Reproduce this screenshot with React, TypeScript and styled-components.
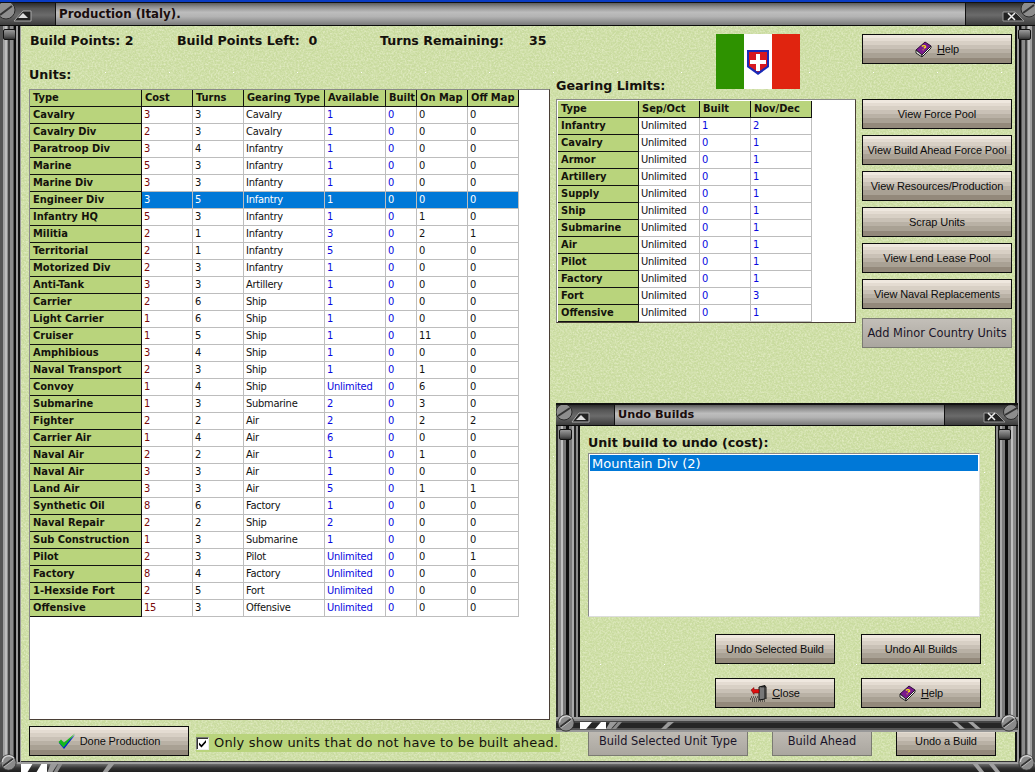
import React from "react";
import styled, { createGlobalStyle } from "styled-components";

const noise = `data:image/svg+xml,${encodeURIComponent(
  `<svg xmlns="http://www.w3.org/2000/svg" width="192" height="192"><filter id="n" x="0" y="0" width="100%" height="100%"><feTurbulence type="fractalNoise" baseFrequency="0.55" numOctaves="3" seed="7" stitchTiles="stitch"/><feColorMatrix values="0 0 0 0 1  0 0 0 0 1  0 0 0 0 0.86  1.7 0 0 0 -0.62"/></filter><rect width="192" height="192" fill="#c9db9f"/><rect width="192" height="192" filter="url(#n)" opacity="0.55"/><rect x="20" y="46" width="1" height="1" fill="#fff"/><rect x="84" y="46" width="1" height="1" fill="#fff"/><rect x="148" y="46" width="1" height="1" fill="#fff"/></svg>`
)}`;

const Global = createGlobalStyle`
  html, body { margin: 0; padding: 0; width: 1035px; height: 772px; overflow: hidden; background: #000; }
  * { box-sizing: border-box; }
  table { border-collapse: separate; border-spacing: 0; table-layout: fixed; }
`;

const Frame = styled.div`
  position: relative;
  width: 1035px;
  height: 772px;
  display: grid;
  grid-template-columns: 21px 994px 20px;
  grid-template-rows: 2px 24px 1fr 10px;
  overflow: hidden;
  background: #3a3a3a;
`;

const BlueStrip = styled.div`
  grid-column: 1 / -1;
  background: #0a3cc4;
`;

const TitleBar = styled.div`
  grid-column: 1 / -1;
  display: flex;
  align-items: stretch;
  height: 100%;
  border-top: 1px solid #111;
  border-bottom: 1px solid #0b0b0b;
  background: linear-gradient(#5c5c5c 0%, #8e8e8e 18%, #bdbdbd 42%, #b3b3b3 62%, #7a7a7a 100%);
`;

const TitleCap = styled.div<{ $w: number; $right?: boolean }>`
  position: relative;
  flex: 0 0 ${(p) => p.$w}px;
  border-right: ${(p) => (p.$right ? "none" : "1px solid #111")};
  border-left: ${(p) => (p.$right ? "1px solid #111" : "none")};
  background: linear-gradient(#2b2b2b 0%, #555 25%, #6b6b6b 55%, #3c3c3c 100%);
`;

const TitleText = styled.div<{ $small?: boolean }>`
  flex: 1;
  padding-left: 3px;
  font: bold ${(p) => (p.$small ? "11.3px/19px" : "11.8px/23px")} "DejaVu Sans", sans-serif;
  color: #1a0d0d;
`;

const CapIcon = styled.svg<{ $l?: number; $r?: number }>`
  position: absolute;
  top: 0;
  ${(p) => (p.$l !== undefined ? `left: ${p.$l}px;` : "")}
  ${(p) => (p.$r !== undefined ? `right: ${p.$r}px;` : "")}
`;

const VRail = styled.div<{ $flip?: boolean }>`
  position: relative;
  background: linear-gradient(
    ${(p) => (p.$flip ? "270deg" : "90deg")},
    #555 0 3px,
    #a0a0a0 3px 5px,
    #bdbdbd 5px 7px,
    #8e8e8e 7px 8px,
    #444 8px 10px,
    #8c8c8c 10px 13px,
    #555 13px 14px,
    #0c0c0c 14px 16px,
    #9a9a9a 16px 18px,
    #121212 18px 20px,
    #9a9a9a 20px 21px
  );
`;

const InnerRail = styled.div<{ $flip?: boolean }>`
  position: relative;
  background: linear-gradient(
    ${(p) => (p.$flip ? "270deg" : "90deg")},
    #2c2c2c 0 2px,
    #8a8a8a 2px 5px,
    #c0c0c0 5px 7px,
    #777 7px 10px,
    #0d0d0d 10px 13px,
    #7c7c7c 13px 16px,
    #aaa 16px 18px,
    #222 18px 20px,
    #8a8a8a 20px 22px,
    #111 22px 24px
  );
`;

const Knob = styled.div`
  position: absolute;
  top: 3px;
  left: 3px;
  width: 13px;
  height: 11px;
  border: 1px solid #111;
  border-radius: 2px;
  background: linear-gradient(#9a9a9a, #5a5a5a 70%, #333);
`;

const HRail = styled.div<{ $inset: number }>`
  grid-column: 1 / -1;
  display: flex;
  align-items: center;
  justify-content: space-between;
  padding: 0 ${(p) => p.$inset}px;
  border-top: 2px solid #a0a0a0;
  background: linear-gradient(#6e6e6e, #333 50%, #1e1e1e);
  overflow: hidden;
`;

const Content = styled.main`
  grid-column: 2;
  display: flex;
  flex-direction: column;
  justify-content: space-between;
  padding: 8px 0 5px 8px;
  background: url("${noise}");
  border-bottom: 1px solid #333;
`;

const Columns = styled.div`
  display: flex;
  align-items: flex-start;
  gap: 6px;
`;

const LeftCol = styled.section`
  flex: 0 0 521px;
  display: flex;
  flex-direction: column;
`;

const Stats = styled.div`
  display: flex;
  height: 33px;
  padding-left: 1px;
  font: bold 12.6px/13px "DejaVu Sans", sans-serif;
  color: #14100c;
`;

const Stat = styled.span<{ $w: number }>`
  flex: 0 0 ${(p) => p.$w}px;
  white-space: pre;
`;

const Heading = styled.h2`
  margin: 0;
  font: bold 12.7px/16px "DejaVu Sans", sans-serif;
  color: #14100c;
`;

const UnitsHeading = styled(Heading)`
  height: 22px;
`;

const Sunken = styled.div<{ $h: number; $w: number }>`
  width: ${(p) => p.$w}px;
  height: ${(p) => p.$h}px;
  background: #fff;
  border-top: 1px solid #8a8a8a;
  border-left: 1px solid #8a8a8a;
  border-right: 1px solid #4a3f36;
  border-bottom: 1px solid #4a3f36;
`;

const Grid = styled.table<{ $w: number }>`
  width: ${(p) => p.$w}px;
  font: 11px/16px "DejaVu Sans Condensed", "DejaVu Sans", sans-serif;
`;

const Head = styled.th`
  height: 17px;
  padding: 0 0 0 3px;
  background: #b9d47c;
  border-right: 1px solid #111;
  border-bottom: 1px solid #111;
  font: bold 11px/16px "DejaVu Sans Condensed", "DejaVu Sans", sans-serif;
  color: #14120c;
  text-align: left;
  white-space: nowrap;
  overflow: hidden;
`;

const RowHead = styled(Head).attrs({ scope: "row" })`
  font-size: 11px;
`;

const tones: Record<string, string> = {
  ink: "#111",
  cost: "#7a0a0a",
  blue: "#0808e0",
};

const Cell = styled.td<{ $tone?: string; $sel?: boolean }>`
  height: 17px;
  padding: 0 0 0 2px;
  border-right: 1px solid #bdbdbd;
  border-bottom: 1px solid #bdbdbd;
  background: ${(p) => (p.$sel ? "#0078d7" : "#fff")};
  color: ${(p) => (p.$sel ? "#fff" : tones[p.$tone || "ink"])};
  letter-spacing: -0.25px;
  white-space: nowrap;
  overflow: hidden;
`;

const MidCol = styled.section`
  flex: 0 0 300px;
  display: flex;
  flex-direction: column;
`;

const MidTop = styled.div`
  height: 65px;
  padding-right: 56px;
  display: flex;
  justify-content: space-between;
  align-items: flex-start;
`;

const GearingHeading = styled(Heading)`
  margin-top: 44px;
`;

const GearingBox = styled(Sunken)`
  padding: 1px 0 0 1px;
`;

const Flag = styled.svg`
  display: block;
`;

const RightCol = styled.section`
  flex: 0 0 150px;
  display: flex;
  flex-direction: column;
`;

const Btn = styled.button<{ $w?: number; $mt?: number }>`
  display: flex;
  align-items: center;
  justify-content: center;
  gap: 5px;
  width: ${(p) => p.$w ?? 150}px;
  height: 30px;
  margin: ${(p) => p.$mt ?? 0}px 0 0;
  padding: 0;
  border: 1px solid #0c0c0c;
  background: linear-gradient(
    #efe8df 0 3px,
    #e4dcd2 3px 6px,
    #d8d0c5 6px 10px,
    #c9c1b6 10px 14px,
    #b9b1a5 14px 18px,
    #a9a194 18px 23px,
    #93897b 23px 100%
  );
  font: 11px/14px "Liberation Sans", sans-serif;
  letter-spacing: -0.1px;
  color: #0c0c0c;
  white-space: nowrap;
  u { text-decoration: underline; }
`;

const DisabledBtn = styled.button<{ $w?: number; $mt?: number }>`
  width: ${(p) => p.$w ?? 150}px;
  height: 30px;
  margin: ${(p) => p.$mt ?? 0}px 0 0;
  padding: 0;
  border: 1px solid #7a7a72;
  background: linear-gradient(#c3bfb8, #aaa69f);
  font: 11.4px/14px "DejaVu Sans", sans-serif;
  color: #1a1428;
  white-space: nowrap;
`;

const BottomBar = styled.div`
  display: flex;
  align-items: center;
  height: 30px;
`;

const CheckStrip = styled.label`
  flex: 0 0 364px;
  height: 18px;
  margin: 4px 28px 0 7px;
  display: flex;
  align-items: center;
  gap: 5px;
  background: #b9d47c;
  font: 13px/16px "DejaVu Sans", sans-serif;
  letter-spacing: 0.18px;
  color: #14120c;
  white-space: nowrap;
`;

const CheckBox = styled.span`
  flex: 0 0 13px;
  height: 13px;
  display: block;
  background: #fff;
  border: 1px solid;
  border-color: #777 #eee #eee #777;
  box-shadow: inset 1px 1px 0 #333;
`;

const BottomGroup = styled.div`
  display: flex;
  gap: 24px;
`;

const Win = styled.aside`
  position: absolute;
  left: 556px;
  top: 403px;
  width: 462px;
  height: 329px;
  display: grid;
  grid-template-columns: 24px 415px 23px;
  grid-template-rows: 22px 1fr 15px;
  background: #333;
  border-top: 1px solid #111;
`;

const WinBody = styled.div`
  grid-column: 2;
  padding: 9px 14px 8px 8px;
  display: flex;
  flex-direction: column;
  background: url("${noise}");
  border-bottom: 1px solid #111;
`;

const WinLabel = styled.div`
  height: 18px;
  font: bold 12.7px/16px "DejaVu Sans", sans-serif;
  color: #14100c;
`;

const ListBox = styled.div`
  width: 392px;
  height: 164px;
  background: #fff;
  border-top: 1px solid #8a8a8a;
  border-left: 1px solid #8a8a8a;
  border-right: 1px solid #ddd;
  border-bottom: 1px solid #ddd;
  padding: 1px;
  margin-bottom: 17px;
`;

const ListItem = styled.div`
  height: 16px;
  padding-left: 2px;
  background: #0078d7;
  color: #fff;
  font: 13px/18px "DejaVu Sans", sans-serif;
`;

const WinRows = styled.div`
  display: flex;
  flex-direction: column;
  gap: 14px;
`;

const WinRow = styled.div`
  display: flex;
  justify-content: flex-end;
  gap: 26px;
`;

const WinHRail = styled(HRail)`
  background: linear-gradient(#8a8a8a 0 2px, #444 2px 4px, #262626 4px 9px, #555 9px 11px, #999 11px 13px);
`;

const Bolt = ({ size = 21, style }: { size?: number; style?: React.CSSProperties }) => (
  <svg width={size} height={size} viewBox="0 0 21 21" style={{ position: "absolute", zIndex: 2, ...style }} aria-hidden="true">
    <circle cx="10.5" cy="10.5" r="9.5" fill="#8b8b8b" stroke="#2a2a2a" />
    <path d="M3 10a8 8 0 0 1 14-5" stroke="#d5d5d5" strokeWidth="1.6" fill="none" />
    <path d="M4 15 L16 6" stroke="#333" strokeWidth="2.4" />
    <path d="M5 16 L17 7" stroke="#cfcfcf" strokeWidth="1" />
  </svg>
);

const Ornament = ({ left, h = 10 }: { left?: boolean; h?: number }) =>
  left ? (
    <svg width="132" height={h} viewBox="0 0 132 10" preserveAspectRatio="none" aria-hidden="true">
      <path d="M0 0H12L6 10H0Z" fill="#fff" />
      <path d="M21 0H26V10H15Z" fill="#fff" />
      <path d="M30 0H37L31 10H26Z" fill="#9a9a9a" />
      <path d="M38 0H42L36 10H32Z" fill="#8a8a8a" />
      <path d="M88 0H94L86 10H81Z" fill="#9a9a9a" />
    </svg>
  ) : (
    <svg width="132" height={h} viewBox="0 0 132 10" preserveAspectRatio="none" aria-hidden="true">
      <path d="M90 0H95L103 10H98Z" fill="#a0a0a0" />
      <path d="M106 0H111L119 10H114Z" fill="#a0a0a0" />
    </svg>
  );

const BookIcon = () => (
  <svg width="17" height="17" viewBox="0 0 17 17" aria-hidden="true">
    <path d="M1 9 L10 1 L16 5 L7 14Z" fill="#7a1a8e" stroke="#2a0a38" />
    <path d="M1 9 L7 14 L7 16 L1 12Z" fill="#e8e8e8" stroke="#222" />
    <path d="M7 14 L16 5 L16 7 L7 16Z" fill="#fff" stroke="#222" />
    <path d="M7 5.5 C8 4 11 4.5 10.5 6.2 L8.8 7.2 M8.2 8.6v.6" stroke="#f4d820" strokeWidth="1.4" fill="none" />
  </svg>
);

const CheckIcon = () => (
  <svg width="17" height="17" viewBox="0 0 17 17" aria-hidden="true">
    <path d="M1 10 L6 16 L17 2 L6.2 11.5 L3 8Z" fill="#0020d0" />
    <path d="M0.5 9 L5.5 14.5 L17 0.5 L6 9.5 L3 6.5Z" fill="#14b81c" />
  </svg>
);

const DoorIcon = () => (
  <svg width="17" height="17" viewBox="0 0 17 17" aria-hidden="true">
    <path d="M9 2 L15 0.5 V14 L9 15Z" fill="#777" stroke="#111" />
    <path d="M11 1.8 H16 V14" fill="none" stroke="#111" />
    <path d="M1 5 L4 2.5 V4.5 H9 V8 H4 V9.5Z" fill="#e01010" stroke="#600" strokeWidth=".5" />
    <path d="M1 12h7M0 14h8M2 16h13" stroke="#111" strokeDasharray="1 1" />
  </svg>
);

const TickMark = () => (
  <svg width="11" height="11" viewBox="0 0 11 11" style={{ display: "block" }} aria-hidden="true">
    <path d="M2 4.5 L4.5 7 L9 2 V4.5 L4.5 9.5 L2 7Z" fill="#000" />
  </svg>
);

const units: [string, string, string, string, string, string, string, string][] = [
  ["Cavalry", "3", "3", "Cavalry", "1", "0", "0", "0"],
  ["Cavalry Div", "2", "3", "Cavalry", "1", "0", "0", "0"],
  ["Paratroop Div", "3", "4", "Infantry", "1", "0", "0", "0"],
  ["Marine", "5", "3", "Infantry", "1", "0", "0", "0"],
  ["Marine Div", "3", "3", "Infantry", "1", "0", "0", "0"],
  ["Engineer Div", "3", "5", "Infantry", "1", "0", "0", "0"],
  ["Infantry HQ", "5", "3", "Infantry", "1", "0", "1", "0"],
  ["Militia", "2", "1", "Infantry", "3", "0", "2", "1"],
  ["Territorial", "2", "1", "Infantry", "5", "0", "0", "0"],
  ["Motorized Div", "2", "3", "Infantry", "1", "0", "0", "0"],
  ["Anti-Tank", "3", "3", "Artillery", "1", "0", "0", "0"],
  ["Carrier", "2", "6", "Ship", "1", "0", "0", "0"],
  ["Light Carrier", "1", "6", "Ship", "1", "0", "0", "0"],
  ["Cruiser", "1", "5", "Ship", "1", "0", "11", "0"],
  ["Amphibious", "3", "4", "Ship", "1", "0", "0", "0"],
  ["Naval Transport", "2", "3", "Ship", "1", "0", "1", "0"],
  ["Convoy", "1", "4", "Ship", "Unlimited", "0", "6", "0"],
  ["Submarine", "1", "3", "Submarine", "2", "0", "3", "0"],
  ["Fighter", "2", "2", "Air", "2", "0", "2", "2"],
  ["Carrier Air", "1", "4", "Air", "6", "0", "0", "0"],
  ["Naval Air", "2", "2", "Air", "1", "0", "1", "0"],
  ["Naval Air", "3", "3", "Air", "1", "0", "0", "0"],
  ["Land Air", "3", "3", "Air", "5", "0", "1", "1"],
  ["Synthetic Oil", "8", "6", "Factory", "1", "0", "0", "0"],
  ["Naval Repair", "2", "2", "Ship", "2", "0", "0", "0"],
  ["Sub Construction", "1", "3", "Submarine", "1", "0", "0", "0"],
  ["Pilot", "2", "3", "Pilot", "Unlimited", "0", "0", "1"],
  ["Factory", "8", "4", "Factory", "Unlimited", "0", "0", "0"],
  ["1-Hexside Fort", "2", "5", "Fort", "Unlimited", "0", "0", "0"],
  ["Offensive", "15", "3", "Offensive", "Unlimited", "0", "0", "0"],
];

const unitCols = [112, 51, 51, 81, 61, 31, 51, 51];
const unitHeads = ["Type", "Cost", "Turns", "Gearing Type", "Available", "Built", "On Map", "Off Map"];
const unitTones = ["", "cost", "ink", "ink", "blue", "blue", "ink", "ink"];

const gearing: [string, string, string][] = [
  ["Infantry", "1", "2"],
  ["Cavalry", "0", "1"],
  ["Armor", "0", "1"],
  ["Artillery", "0", "1"],
  ["Supply", "0", "1"],
  ["Ship", "0", "1"],
  ["Submarine", "0", "1"],
  ["Air", "0", "1"],
  ["Pilot", "0", "1"],
  ["Factory", "0", "1"],
  ["Fort", "0", "3"],
  ["Offensive", "0", "1"],
];
const gearCols = [81, 61, 51, 61];

export default function App() {
  return (
    <>
      <Global />
      <Frame>
        <BlueStrip />
        <TitleBar>
          <TitleCap $w={56}>
            <CapIcon $l={0} width="34" height="22" viewBox="0 0 34 22" aria-hidden="true">
              <circle cx="6" cy="7" r="9" fill="#8d8d8d" stroke="#2a2a2a" />
              <path d="M0 12 L12 3" stroke="#333" strokeWidth="2" />
              <path d="M14 18 L23 8 H31 V18Z" fill="#222" stroke="#aaa" />
              <path d="M18 15 L23 10 L28 15Z" fill="#ddd" />
            </CapIcon>
          </TitleCap>
          <TitleText>Production (Italy).</TitleText>
          <TitleCap $w={70} $right>
            <CapIcon $r={0} width="36" height="22" viewBox="0 0 36 22" aria-hidden="true">
              <path d="M4 18 V9 H16 L25 18Z" fill="#222" stroke="#999" />
              <path d="M9 10 L16 17 M16 10 L9 17" stroke="#eee" strokeWidth="1.5" />
              <circle cx="30" cy="6" r="8" fill="#8d8d8d" stroke="#2a2a2a" />
              <path d="M24 10 L35 2" stroke="#333" strokeWidth="2" />
            </CapIcon>
          </TitleCap>
        </TitleBar>

        <VRail>
          <Knob />
          <Bolt size={17} style={{ left: 0, bottom: -9 }} />
        </VRail>
        <Content>
          <Columns>
            <LeftCol>
              <Stats>
                <Stat $w={147}>Build Points: 2</Stat>
                <Stat $w={203}>Build Points Left:  0</Stat>
                <Stat $w={149}>Turns Remaining:</Stat>
                <Stat $w={20}>35</Stat>
              </Stats>
              <UnitsHeading>Units:</UnitsHeading>
              <Sunken $w={521} $h={631}>
                <Grid $w={489}>
                  <colgroup>
                    {unitCols.map((w, i) => (
                      <col key={i} width={w} />
                    ))}
                  </colgroup>
                  <thead>
                    <tr>
                      {unitHeads.map((h) => (
                        <Head key={h}>{h}</Head>
                      ))}
                    </tr>
                  </thead>
                  <tbody>
                    {units.map((row, i) => (
                      <tr key={i}>
                        <RowHead>{row[0]}</RowHead>
                        {row.slice(1).map((v, j) => (
                          <Cell key={j} $tone={unitTones[j + 1]} $sel={i === 5}>
                            {v}
                          </Cell>
                        ))}
                      </tr>
                    ))}
                  </tbody>
                </Grid>
              </Sunken>
            </LeftCol>

            <MidCol>
              <MidTop>
                <GearingHeading>Gearing Limits:</GearingHeading>
                <Flag width="84" height="55" viewBox="0 0 84 55" role="img" aria-label="Italy">
                  <rect width="28" height="55" fill="#2e9200" />
                  <rect x="28" width="28" height="55" fill="#fff" />
                  <rect x="56" width="28" height="55" fill="#e0240f" />
                  <path d="M31 16 H53 V33 L42 41 L31 33Z" fill="#1a2ab8" />
                  <path d="M33 18 H51 V32 L42 38 L33 32Z" fill="#d81820" />
                  <path d="M40 20 H44 V26 H50 V30 H44 V37 H40 V30 H34 V26 H40Z" fill="#fff" />
                </Flag>
              </MidTop>
              <GearingBox $w={300} $h={224}>
                <Grid $w={254}>
                  <colgroup>
                    {gearCols.map((w, i) => (
                      <col key={i} width={w} />
                    ))}
                  </colgroup>
                  <thead>
                    <tr>
                      <Head>Type</Head>
                      <Head>Sep/Oct</Head>
                      <Head>Built</Head>
                      <Head>Nov/Dec</Head>
                    </tr>
                  </thead>
                  <tbody>
                    {gearing.map((g) => (
                      <tr key={g[0]}>
                        <RowHead>{g[0]}</RowHead>
                        <Cell>Unlimited</Cell>
                        <Cell $tone="blue">{g[1]}</Cell>
                        <Cell $tone="blue">{g[2]}</Cell>
                      </tr>
                    ))}
                  </tbody>
                </Grid>
              </GearingBox>
            </MidCol>

            <RightCol>
              <Btn>
                <BookIcon />
                <span>
                  <u>H</u>elp
                </span>
              </Btn>
              <Btn $mt={35}>View Force Pool</Btn>
              <Btn $mt={6}>View Build Ahead Force Pool</Btn>
              <Btn $mt={6}>View Resources/Production</Btn>
              <Btn $mt={6}>Scrap Units</Btn>
              <Btn $mt={6}>View Lend Lease Pool</Btn>
              <Btn $mt={6}>View Naval Replacements</Btn>
              <DisabledBtn $mt={9}>Add Minor Country Units</DisabledBtn>
            </RightCol>
          </Columns>

          <BottomBar>
            <Btn $w={160}>
              <CheckIcon />
              <span>Done Production</span>
            </Btn>
            <CheckStrip>
              <CheckBox>
                <TickMark />
              </CheckBox>
              Only show units that do not have to be built ahead.
            </CheckStrip>
            <BottomGroup>
              <DisabledBtn $w={160}>Build Selected Unit Type</DisabledBtn>
              <DisabledBtn $w={100}>Build Ahead</DisabledBtn>
              <Btn $w={100}>Undo a Build</Btn>
            </BottomGroup>
          </BottomBar>
        </Content>
        <VRail $flip>
          <Knob />
          <Bolt size={17} style={{ right: 0, bottom: -9 }} />
        </VRail>
        <HRail $inset={21}>
          <Ornament left />
          <Ornament />
        </HRail>

        <Win>
          <TitleBar>
            <TitleCap $w={59}>
              <CapIcon $l={0} width="36" height="22" viewBox="0 0 36 22" aria-hidden="true">
                <circle cx="8" cy="7" r="8" fill="#8d8d8d" stroke="#2a2a2a" />
                <path d="M2 11 L14 3" stroke="#333" strokeWidth="2" />
                <path d="M16 17 L23 8 H33 V17Z" fill="#222" stroke="#aaa" />
                <path d="M20 15 L25 10 L30 15Z" fill="#ddd" />
              </CapIcon>
            </TitleCap>
            <TitleText $small>Undo Builds</TitleText>
            <TitleCap $w={74} $right>
              <CapIcon $r={0} width="36" height="22" viewBox="0 0 36 22" aria-hidden="true">
                <path d="M2 17 V8 H14 L23 17Z" fill="#222" stroke="#999" />
                <path d="M6 8 L13 15 M13 8 L6 15" stroke="#eee" strokeWidth="1.5" />
                <circle cx="29" cy="7" r="7.5" fill="#8d8d8d" stroke="#2a2a2a" />
                <path d="M23 10 L35 3" stroke="#333" strokeWidth="2" />
              </CapIcon>
            </TitleCap>
          </TitleBar>
          <InnerRail>
            <Knob />
            <Bolt size={18} style={{ left: 1, bottom: -15 }} />
          </InnerRail>
          <WinBody>
            <WinLabel>Unit build to undo (cost):</WinLabel>
            <ListBox>
              <ListItem>Mountain Div (2)</ListItem>
            </ListBox>
            <WinRows>
              <WinRow>
                <Btn $w={120}>Undo Selected Build</Btn>
                <Btn $w={120}>Undo All Builds</Btn>
              </WinRow>
              <WinRow>
                <Btn $w={120}>
                  <DoorIcon />
                  <span>
                    <u>C</u>lose
                  </span>
                </Btn>
                <Btn $w={120}>
                  <BookIcon />
                  <span>
                    <u>H</u>elp
                  </span>
                </Btn>
              </WinRow>
            </WinRows>
          </WinBody>
          <InnerRail $flip>
            <Knob />
            <Bolt size={18} style={{ right: 0, bottom: -15 }} />
          </InnerRail>
          <WinHRail $inset={24}>
            <Ornament left h={7} />
            <Ornament h={7} />
          </WinHRail>
        </Win>
      </Frame>
    </>
  );
}
